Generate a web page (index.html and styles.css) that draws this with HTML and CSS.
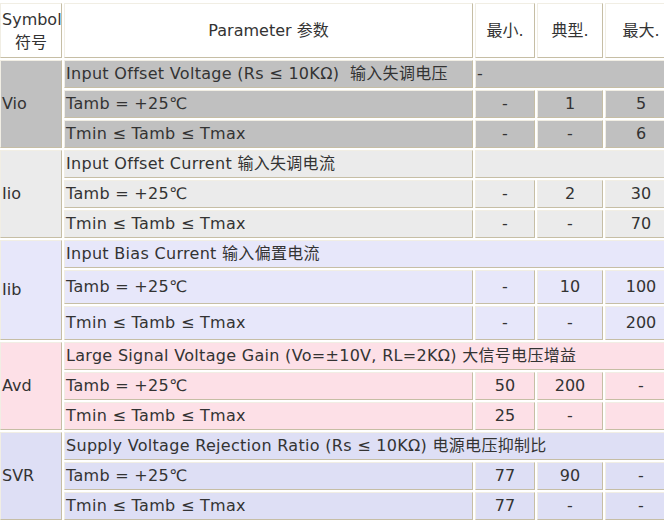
FILE: index.html
```html
<!DOCTYPE html>
<html lang="zh">
<head>
<meta charset="utf-8">
<title>Spec table</title>
<link rel="stylesheet" href="styles.css">
</head>
<body>
<table class="spec">
  <colgroup>
    <col class="c-sym"><col class="c-par"><col class="c-min"><col class="c-typ"><col class="c-max">
  </colgroup>
  <thead>
    <tr class="r-head">
      <th class="sym-h">Symbol<br>符号</th>
      <th>Parameter 参数</th>
      <th>最小.</th>
      <th>典型.</th>
      <th>最大.</th>
    </tr>
  </thead>
  <tbody class="g-vio">
    <tr class="r">
      <td class="sym" rowspan="3">Vio</td>
      <td class="par">Input Offset Voltage (Rs ≤ 10KΩ)&nbsp; 输入失调电压</td>
      <td class="par" colspan="3">-</td>
    </tr>
    <tr class="r"><td class="par">Tamb = +25℃</td><td class="num">-</td><td class="num">1</td><td class="num">5</td></tr>
    <tr class="r"><td class="par">Tmin ≤ Tamb ≤ Tmax</td><td class="num">-</td><td class="num">-</td><td class="num">6</td></tr>
  </tbody>
  <tbody class="g-iio">
    <tr class="r">
      <td class="sym" rowspan="3">Iio</td>
      <td class="par">Input Offset Current 输入失调电流</td>
      <td class="par" colspan="3"></td>
    </tr>
    <tr class="r"><td class="par">Tamb = +25℃</td><td class="num">-</td><td class="num">2</td><td class="num">30</td></tr>
    <tr class="r"><td class="par">Tmin ≤ Tamb ≤ Tmax</td><td class="num">-</td><td class="num">-</td><td class="num">70</td></tr>
  </tbody>
  <tbody class="g-iib">
    <tr class="r">
      <td class="sym" rowspan="3">Iib</td>
      <td class="par" colspan="4">Input Bias Current 输入偏置电流</td>
    </tr>
    <tr class="r-tall"><td class="par">Tamb = +25℃</td><td class="num">-</td><td class="num">10</td><td class="num">100</td></tr>
    <tr class="r-tall"><td class="par">Tmin ≤ Tamb ≤ Tmax</td><td class="num">-</td><td class="num">-</td><td class="num">200</td></tr>
  </tbody>
  <tbody class="g-avd">
    <tr class="r">
      <td class="sym" rowspan="3">Avd</td>
      <td class="par" colspan="4">Large Signal Voltage Gain (Vo=±10V, RL=2KΩ) 大信号电压增益</td>
    </tr>
    <tr class="r"><td class="par">Tamb = +25℃</td><td class="num">50</td><td class="num">200</td><td class="num">-</td></tr>
    <tr class="r"><td class="par">Tmin ≤ Tamb ≤ Tmax</td><td class="num">25</td><td class="num">-</td><td class="num"></td></tr>
  </tbody>
  <tbody class="g-svr">
    <tr class="r">
      <td class="sym" rowspan="3">SVR</td>
      <td class="par" colspan="4">Supply Voltage Rejection Ratio (Rs ≤ 10KΩ) 电源电压抑制比</td>
    </tr>
    <tr class="r"><td class="par">Tamb = +25℃</td><td class="num">77</td><td class="num">90</td><td class="num">-</td></tr>
    <tr class="r"><td class="par">Tmin ≤ Tamb ≤ Tmax</td><td class="num">77</td><td class="num">-</td><td class="num">-</td></tr>
  </tbody>
</table>
</body>
</html>
```

FILE: styles.css
```css
html, body {
  margin: 0;
  padding: 0;
  background: #ffffff;
  overflow: hidden;
}

body {
  font-family: "DejaVu Sans", "Noto Sans CJK SC", sans-serif;
  font-size: 16px;
  color: #333333;
}

.spec {
  table-layout: fixed;
  width: 681px;
  border-collapse: separate;
  border-spacing: 2px;
  margin: 1px 0 0 -2px;
  background: #ffffff;
}

.c-sym { width: 62px; }
.c-par { width: 409px; }
.c-min { width: 60px; }
.c-typ { width: 66px; }
.c-max { width: 72px; }

.spec th,
.spec td {
  box-sizing: border-box;
  border: 1px solid;
  border-color: #f1eee4 #c6bea5 #c6bea5 #f1eee4;
  padding: 0 1px;
  line-height: 20px;
  vertical-align: middle;
  white-space: nowrap;
  overflow: hidden;
}

.spec th {
  font-weight: normal;
  text-align: center;
  background: #ffffff;
  line-height: 23px;
}

.r-head { height: 55px; }
.r { height: 28px; }
.r-tall { height: 34px; }

.sym { text-align: left; }
.par {
  text-align: left;
  letter-spacing: 0.3px;
}
.num { text-align: center; }

.g-vio td { background: #c0c0c0; }
.g-iio td { background: #ebebeb; }
.g-iib td { background: #e7e7fa; }
.g-avd td { background: #fde0e7; }
.g-svr td { background: #dedff5; }
```
